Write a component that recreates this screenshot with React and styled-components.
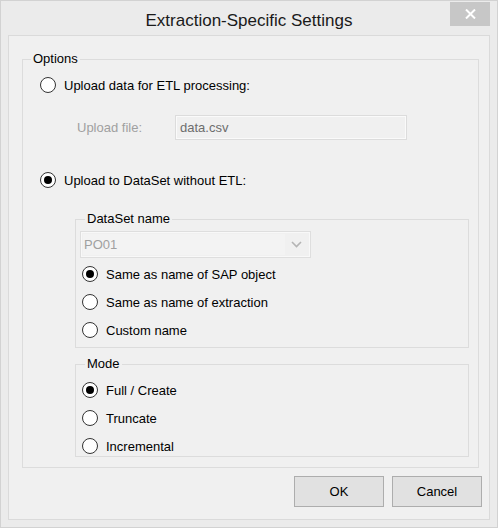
import React from 'react';
import styled, { createGlobalStyle } from 'styled-components';

const Global = createGlobalStyle`
  html, body { margin: 0; padding: 0; background: #ebebeb; }
  body { font-family: "Liberation Sans", Arial, sans-serif; font-size: 13px; color: #000; }
  * { box-sizing: border-box; }
`;

const Window = styled.div`
  width: 498px;
  height: 528px;
  border: 1px solid #d2d2d2;
  background: #ebebeb;
  display: flex;
  flex-direction: column;
  padding: 0 7px 7px 7px;
`;

const TitleBar = styled.div`
  height: 34px;
  margin: 0 -7px;
  display: grid;
  grid-template-columns: 1fr auto 1fr;
  align-items: start;
`;

const Title = styled.div`
  grid-column: 2;
  font-size: 17px;
  line-height: 20px;
  margin-top: 10px;
  color: #1a1a1a;
  white-space: nowrap;
`;

const CloseButton = styled.div`
  grid-column: 3;
  justify-self: end;
  width: 40px;
  height: 24px;
  margin: 1px 7px 0 0;
  background: #c7c7c7;
  display: flex;
  align-items: center;
  justify-content: center;
`;

const Content = styled.div`
  flex: 1;
  border: 1px solid #dadada;
  background: #f0f0f0;
  display: flex;
  flex-direction: column;
`;

const Group = styled.fieldset`
  margin: ${p => p.$margin};
  padding: 0;
  border: 1px solid #dcdcdc;
  min-width: 0;
`;

const Legend = styled.legend`
  margin-left: ${p => p.$offset}px;
  padding: 0 2px;
  font-size: 13px;
  line-height: 16px;
  color: #000;
`;

const GroupBody = styled.div`
  padding: ${p => p.$padding};
  display: flex;
  flex-direction: column;
`;

const RadioRow = styled.label`
  display: flex;
  align-items: center;
  gap: 8px;
  height: 20px;
  margin-top: ${p => p.$top || 0}px;
  white-space: nowrap;
`;

const RadioCircle = styled.span`
  width: 16px;
  height: 16px;
  border-radius: 50%;
  border: 1px solid #333;
  background: #fff;
  display: flex;
  align-items: center;
  justify-content: center;
  flex: none;
  &::after {
    content: '';
    width: 8px;
    height: 8px;
    border-radius: 50%;
    background: ${p => (p.$checked ? '#000' : 'transparent')};
  }
`;

const FileRow = styled.div`
  display: flex;
  align-items: center;
  margin: 20px 0 0 37px;
`;

const DisabledLabel = styled.span`
  width: 98px;
  color: #a0a0a0;
`;

const TextBox = styled.div`
  width: 232px;
  height: 25px;
  border: 1px solid #dcdcdc;
  box-shadow: inset 0 0 0 1px #fafafa;
  background: #f0f0f0;
  color: #6d6d6d;
  display: flex;
  align-items: center;
  padding-left: 4px;
`;

const Combo = styled.div`
  width: 231px;
  height: 27px;
  margin: 4px 0 0 4px;
  border: 1px solid #dedede;
  box-shadow: inset 0 0 0 1px #f8f8f8;
  background: #f0f0f0;
  display: flex;
  align-items: center;
  justify-content: space-between;
  padding: 0 8px 0 2px;
  color: #a0a0a0;
`;

const ComboText = styled.span`
  flex: 1;
  background: #f3f3f3;
  height: 21px;
  line-height: 21px;
  margin-right: 6px;
  padding-left: 1px;
`;

const ButtonRow = styled.div`
  display: flex;
  justify-content: flex-end;
  gap: 8px;
  margin: 8px 7px 0 0;
`;

const Button = styled.button`
  width: 90px;
  height: 31px;
  border: 1px solid #adadad;
  background: #e1e1e1;
  font-family: "Liberation Sans", Arial, sans-serif;
  font-size: 13px;
  color: #000;
  padding: 0;
`;

const Radio = ({ checked, children, top }) => (
  <RadioRow $top={top}>
    <RadioCircle $checked={checked} />
    <span>{children}</span>
  </RadioRow>
);

export default function App() {
  return (
    <>
      <Global />
      <Window>
        <TitleBar>
          <Title>Extraction-Specific Settings</Title>
          <CloseButton>
            <svg width="11" height="10" viewBox="0 0 11 10">
              <path d="M1 0.5 L10 9.5 M10 0.5 L1 9.5" stroke="#fff" strokeWidth="2" />
            </svg>
          </CloseButton>
        </TitleBar>
        <Content>
          <Group $margin="15px 10px 0 13px">
            <Legend $offset={8}>Options</Legend>
            <GroupBody $padding="8px 9px 10px 17px">
              <Radio>Upload data for ETL processing:</Radio>
              <FileRow>
                <DisabledLabel>Upload file:</DisabledLabel>
                <TextBox>data.csv</TextBox>
              </FileRow>
              <Radio checked top={30}>Upload to DataSet without ETL:</Radio>
              <Group $margin="21px 0 0 35px">
                <Legend $offset={9}>DataSet name</Legend>
                <GroupBody $padding="0 0 7px 0">
                  <Combo>
                    <ComboText>PO01</ComboText>
                    <svg width="11" height="7" viewBox="0 0 11 7">
                      <path d="M1 1 L5.5 5.5 L10 1" stroke="#b4b4b4" strokeWidth="1.6" fill="none" />
                    </svg>
                  </Combo>
                  <GroupBody $padding="6px 0 0 6px">
                    <Radio checked>Same as name of SAP object</Radio>
                    <Radio top={8}>Same as name of extraction</Radio>
                    <Radio top={8}>Custom name</Radio>
                  </GroupBody>
                </GroupBody>
              </Group>
              <Group $margin="8px 0 0 35px">
                <Legend $offset={9}>Mode</Legend>
                <GroupBody $padding="8px 0 0 6px">
                  <Radio checked>Full / Create</Radio>
                  <Radio top={8}>Truncate</Radio>
                  <Radio top={8}>Incremental</Radio>
                </GroupBody>
              </Group>
            </GroupBody>
          </Group>
          <ButtonRow>
            <Button>OK</Button>
            <Button>Cancel</Button>
          </ButtonRow>
        </Content>
      </Window>
    </>
  );
}
